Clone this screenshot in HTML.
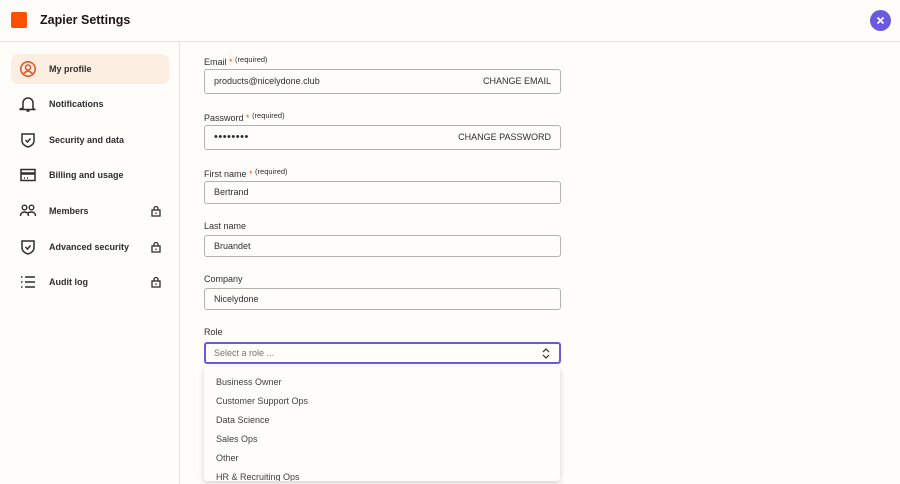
<!DOCTYPE html>
<html><head><style>
*{box-sizing:border-box;margin:0;padding:0}
body{width:900px;height:484px;overflow:hidden;background:#fffdf9;font-family:"Liberation Sans",sans-serif;color:#2d2e2e;position:relative}
.hdr{position:absolute;left:0;top:0;width:900px;height:42px;border-bottom:1px solid #e6e3dd}
.logo{position:absolute;left:11px;top:12px;width:16px;height:16px;background:#ff4f00;border-radius:2px}
.title{position:absolute;left:40px;top:13px;font-size:12.5px;font-weight:bold;color:#201515}
.close{position:absolute;left:870px;top:10px;width:21px;height:21px;border-radius:50%;background:#6a5ae0}
.side{position:absolute;left:0;top:42px;width:180px;height:442px;border-right:1px solid #e6e3dd}
.item{position:absolute;left:11px;width:158px;height:30px;border-radius:7px;font-size:9px;font-weight:bold;color:#2d2e2e}
.item.act{background:#fdeee2}
.item span{position:absolute;left:38px;top:10px}
.item svg{position:absolute;left:8px;top:6px}
.lbl{position:absolute;left:204px;font-size:9px;color:#2d2e2e}
.lbl b{color:#ff4f00;font-weight:normal}
.lbl i{font-style:normal;font-size:7.5px;vertical-align:3px}
.inp{position:absolute;left:204px;width:357px;border:1px solid #b5b2ab;border-radius:3px;font-size:9px;padding-left:9px;background:#fffdf9}
.inp .r{position:absolute;right:9px}
.dd{position:absolute;left:204px;top:367px;width:356px;height:114px;background:#fffdf9;box-shadow:0 2px 6px rgba(0,0,0,.18);border-radius:3px;overflow:hidden}
.dd div{position:absolute;left:12px;font-size:9px;color:#403f3e}
</style></head><body>
<div class="hdr"><div class="logo"></div><div class="title">Zapier Settings</div><div class="close"><svg width="21" height="21" viewBox="0 0 21 21" stroke="#fff" stroke-width="1.8"><path d="M7.5 7.5l6 6M13.5 7.5l-6 6"/></svg></div></div>
<div class="side">
<div class="item act" style="top:12px"><svg width="18" height="18" viewBox="0 0 18 18" fill="none" stroke="#e5582a" stroke-width="1.6"><circle cx="9" cy="9" r="7.2"/><circle cx="9" cy="7.5" r="2.5"/><path d="M4.5 14c1.3-2 2.8-2.7 4.5-2.7s3.2.7 4.5 2.7"/></svg><span>My profile</span></div>
<div class="item" style="top:47px"><svg width="18" height="18" viewBox="0 0 18 18" fill="none" stroke="#2d2e2e" stroke-width="1.5"><path d="M4 13V8a5 5 0 0 1 10 0v5l1.5 1.5h-15zM7.5 16h3"/></svg><span>Notifications</span></div>
<div class="item" style="top:83px"><svg width="18" height="18" viewBox="0 0 18 18" fill="none" stroke="#2d2e2e" stroke-width="1.5"><path d="M3 3h12v7c0 3-3 5-6 6-3-1-6-3-6-6z"/><path d="M6.5 9l2 2 3-3.5"/></svg><span>Security and data</span></div>
<div class="item" style="top:118px"><svg width="18" height="18" viewBox="0 0 18 18" fill="none" stroke="#2d2e2e" stroke-width="1.5"><rect x="2" y="3.5" width="14" height="11"/><path d="M2 7.5h14" stroke-width="2.5"/><path d="M5 12h1M8 12h1"/></svg><span>Billing and usage</span></div>
<div class="item" style="top:154px"><svg width="18" height="18" viewBox="0 0 18 18" fill="none" stroke="#2d2e2e" stroke-width="1.4"><circle cx="5.5" cy="5.5" r="2.3"/><circle cx="12.5" cy="5.5" r="2.3"/><path d="M1.5 14c0-3 2-4 4-4s4 1 4 4M9 11c1-1 2-1 3.5-1 2 0 4 1 4 4"/></svg><span>Members</span><svg width="10" height="12" viewBox="0 0 10 12" fill="none" stroke="#2d2e2e" stroke-width="1.3" style="left:140px;top:9px"><rect x="1" y="5" width="8" height="6"/><path d="M3 5V3.5a2 2 0 0 1 4 0V5"/><path d="M5 7.5v1.5"/></svg></div>
<div class="item" style="top:190px"><svg width="18" height="18" viewBox="0 0 18 18" fill="none" stroke="#2d2e2e" stroke-width="1.5"><path d="M3 3h12v7c0 3-3 5-6 6-3-1-6-3-6-6z"/><path d="M6.5 9l2 2 3-3.5"/></svg><span>Advanced security</span><svg width="10" height="12" viewBox="0 0 10 12" fill="none" stroke="#2d2e2e" stroke-width="1.3" style="left:140px;top:9px"><rect x="1" y="5" width="8" height="6"/><path d="M3 5V3.5a2 2 0 0 1 4 0V5"/><path d="M5 7.5v1.5"/></svg></div>
<div class="item" style="top:225px"><svg width="18" height="18" viewBox="0 0 18 18" fill="none" stroke="#2d2e2e" stroke-width="1.5"><path d="M2 4h1.5M2 9h1.5M2 14h1.5M6 4h10M6 9h10M6 14h10"/></svg><span>Audit log</span><svg width="10" height="12" viewBox="0 0 10 12" fill="none" stroke="#2d2e2e" stroke-width="1.3" style="left:140px;top:9px"><rect x="1" y="5" width="8" height="6"/><path d="M3 5V3.5a2 2 0 0 1 4 0V5"/><path d="M5 7.5v1.5"/></svg></div>
</div>

<div class="lbl" style="top:55px">Email <b>*</b> <i>(required)</i></div>
<div class="inp" style="top:69px;height:25px;line-height:23px">products@nicelydone.club<span class="r">CHANGE EMAIL</span></div>
<div class="lbl" style="top:111px">Password <b>*</b> <i>(required)</i></div>
<div class="inp" style="top:125px;height:25px;line-height:23px"><span style="font-size:11px;letter-spacing:0.5px">••••••••</span><span class="r">CHANGE PASSWORD</span></div>
<div class="lbl" style="top:167px">First name <b>*</b> <i>(required)</i></div>
<div class="inp" style="top:181px;height:23px;line-height:21px">Bertrand</div>
<div class="lbl" style="top:221px">Last name</div>
<div class="inp" style="top:235px;height:22px;line-height:20px">Bruandet</div>
<div class="lbl" style="top:274px">Company</div>
<div class="inp" style="top:288px;height:22px;line-height:20px">Nicelydone</div>
<div class="lbl" style="top:327px">Role</div>
<div class="inp" style="top:342px;height:22px;line-height:18px;border:2px solid #6a5ae0;color:#77746e;padding-left:8px">Select a role ...<svg class="r" style="top:4px" width="8" height="11" viewBox="0 0 8 11" fill="none" stroke="#2d2e2e" stroke-width="1.2"><path d="M1 4l3-3 3 3M1 7l3 3 3-3"/></svg></div>
<div class="dd">
<div style="top:10px">Business Owner</div>
<div style="top:29px">Customer Support Ops</div>
<div style="top:48px">Data Science</div>
<div style="top:67px">Sales Ops</div>
<div style="top:86px">Other</div>
<div style="top:105px">HR &amp; Recruiting Ops</div>
</div>
</body></html>
